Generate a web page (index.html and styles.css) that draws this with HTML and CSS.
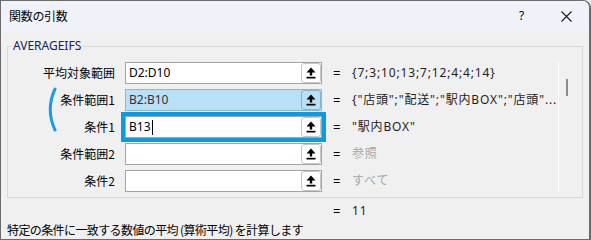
FILE: index.html
```html
<!DOCTYPE html>
<html lang="ja">
<head>
<meta charset="utf-8">
<title>関数の引数</title>
<link rel="stylesheet" href="styles.css">
</head>
<body>
<div class="window">
  <div class="titlebar">
    <span class="title">関数の引数</span>
    <span class="help">?</span>
    <span class="close"><svg width="11" height="11" viewBox="0 0 11 11"><path d="M0.5 0.5 L10.5 10.5 M10.5 0.5 L0.5 10.5" stroke="#1a1a1a" stroke-width="1.1" fill="none"/></svg></span>
  </div>
  <div class="main">
    <fieldset class="group">
      <legend>AVERAGEIFS</legend>
      <div class="args">
        <div class="bracket"><svg width="10" height="45" viewBox="0 0 10 45"><path d="M8 2 Q-1.5 22.5 8 43" stroke="#1b9be1" stroke-width="3" fill="none" stroke-linecap="round"/></svg></div>

        <div class="label r1">平均対象範囲</div>
        <div class="box r1"><span class="txt">D2:D10</span><span class="btn"><svg width="10" height="12" viewBox="0 0 10 12"><path d="M5 0.5 L9.5 5.5 L6.2 5.5 L6.2 8.6 L3.8 8.6 L3.8 5.5 L0.5 5.5 Z" fill="#000"/><rect x="0.5" y="9.8" width="9" height="1.7" fill="#000"/></svg></span></div>
        <div class="eq r1">=</div>
        <div class="val r1">{7;3;10;13;7;12;4;4;14}</div>

        <div class="label r2">条件範囲1</div>
        <div class="box sel r2"><span class="txt dim">B2:B10</span><span class="btn"><svg width="10" height="12" viewBox="0 0 10 12"><path d="M5 0.5 L9.5 5.5 L6.2 5.5 L6.2 8.6 L3.8 8.6 L3.8 5.5 L0.5 5.5 Z" fill="#000"/><rect x="0.5" y="9.8" width="9" height="1.7" fill="#000"/></svg></span></div>
        <div class="eq r2">=</div>
        <div class="val r2">{"店頭";"配送";"駅内BOX";"店頭"...</div>

        <div class="label r3">条件1</div>
        <div class="box focus r3"><span class="txt">B13</span><span class="caret"></span><span class="btn"><svg width="10" height="12" viewBox="0 0 10 12"><path d="M5 0.5 L9.5 5.5 L6.2 5.5 L6.2 8.6 L3.8 8.6 L3.8 5.5 L0.5 5.5 Z" fill="#000"/><rect x="0.5" y="9.8" width="9" height="1.7" fill="#000"/></svg></span></div>
        <div class="eq r3">=</div>
        <div class="val r3">"駅内BOX"</div>

        <div class="label r4">条件範囲2</div>
        <div class="box r4"><span class="txt"></span><span class="btn"><svg width="10" height="12" viewBox="0 0 10 12"><path d="M5 0.5 L9.5 5.5 L6.2 5.5 L6.2 8.6 L3.8 8.6 L3.8 5.5 L0.5 5.5 Z" fill="#000"/><rect x="0.5" y="9.8" width="9" height="1.7" fill="#000"/></svg></span></div>
        <div class="eq r4">=</div>
        <div class="val gray r4">参照</div>

        <div class="label r5">条件2</div>
        <div class="box r5"><span class="txt"></span><span class="btn"><svg width="10" height="12" viewBox="0 0 10 12"><path d="M5 0.5 L9.5 5.5 L6.2 5.5 L6.2 8.6 L3.8 8.6 L3.8 5.5 L0.5 5.5 Z" fill="#000"/><rect x="0.5" y="9.8" width="9" height="1.7" fill="#000"/></svg></span></div>
        <div class="eq r5">=</div>
        <div class="val gray r5">すべて</div>

        <div class="scroll"><div class="thumb"></div></div>
      </div>
    </fieldset>
    <div class="result"><span class="eq">=</span><span class="val">11</span></div>
    <div class="desc">特定の条件に一致する数値の平均 (算術平均) を計算します</div>
  </div>
</div>
</body>
</html>
```
FILE: styles.css
```css
* { box-sizing: border-box; }
html, body { margin: 0; padding: 0; }
body {
  width: 591px;
  height: 240px;
  overflow: hidden;
  background: #f0f0f0;
  font-family: "Noto Sans", "Noto Sans CJK JP", sans-serif;
  font-size: 12px;
  color: #000;
}
.window {
  width: 591px;
  height: 240px;
  border: 1px solid #6b6b6b;
  border-right-width: 2px;
  border-top-right-radius: 8px;
  overflow: hidden;
  display: flex;
  flex-direction: column;
  background: #f0f0f0;
}
.titlebar {
  height: 30px;
  flex: none;
  display: flex;
  align-items: center;
  padding-left: 8px;
  background: #eff3f9;
  line-height: 16px;
}
.title { flex: 1; font-family: "Noto Sans CJK JP", sans-serif; letter-spacing: -0.3px; }
.help { width: 5px; margin-right: 37px; font-size: 12px; }
.close { width: 11px; height: 11px; margin-right: 17px; display: flex; }

.main { flex: 1; display: flex; flex-direction: column; }
.group {
  margin: 8px 6px 0 6px;
  padding: 0 0 5px 0;
  border: 1px solid #d8d8d8;
  min-width: 0;
}
.group legend {
  margin-left: 3px;
  padding: 0 2px;
  line-height: 14px;
  color: #15225a;
  font-size: 12px;
}
.args {
  display: grid;
  grid-template-columns: 117px 208px 19px 206px 24px;
  grid-template-rows: repeat(5, 22px);
  row-gap: 5px;
  padding-top: 9px;
}
.r1 { grid-row: 1; }
.r2 { grid-row: 2; }
.r3 { grid-row: 3; }
.r4 { grid-row: 4; }
.r5 { grid-row: 5; }
.label {
  grid-column: 1;
  align-self: center;
  text-align: right;
  padding-right: 10px;
  line-height: 16px;
  font-family: "Noto Sans CJK JP", sans-serif;
}
.bracket {
  grid-column: 1;
  grid-row: 2 / 4;
  justify-self: start;
  align-self: start;
  margin-left: 39px;
  margin-top: -2px;
  display: flex;
}
.box {
  grid-column: 2;
  width: 197px;
  height: 22px;
  border: 1px solid #a3a3a3;
  background: #fff;
  display: flex;
  align-items: center;
  padding-left: 3px;
}
.box .txt { line-height: 16px; }
.box .dim { color: #333; }
.box.sel { background: #b9e0f6; border-color: #8db8d4; }
.box.sel .btn { background: #b9e0f6; border-color: #8cb2cc; }
.box.focus { outline: 4px solid #0a9be2; }
.caret { width: 1px; height: 15px; background: #000; margin-left: 1px; }
.btn {
  margin-left: auto;
  width: 20px;
  height: 20px;
  border: 1px solid #c6c6c6;
  border-radius: 3px;
  background: #fff;
  display: flex;
  align-items: center;
  justify-content: center;
}
.eq { grid-column: 3; align-self: center; line-height: 16px; font-size: 13px; }
.val {
  grid-column: 4;
  align-self: center;
  line-height: 16px;
  white-space: nowrap;
  color: #1e1e1e;
  letter-spacing: 0.85px;
}
.val.gray { color: #a6a6a6; }
.scroll {
  grid-column: 5;
  grid-row: 1 / 6;
  border-left: 1px solid #fff;
}
.thumb {
  width: 2px;
  height: 17px;
  margin-left: 7px;
  margin-top: 17px;
  background: #8a8a8a;
}
.result {
  display: flex;
  margin-top: 5px;
  padding-left: 332px;
  line-height: 16px;
}
.result .eq { width: 19px; }
.desc {
  margin-top: 3px;
  padding-left: 6px;
  line-height: 16px;
  white-space: nowrap;
  font-family: "Noto Sans CJK JP", sans-serif;
  letter-spacing: -0.6px;
}
```
